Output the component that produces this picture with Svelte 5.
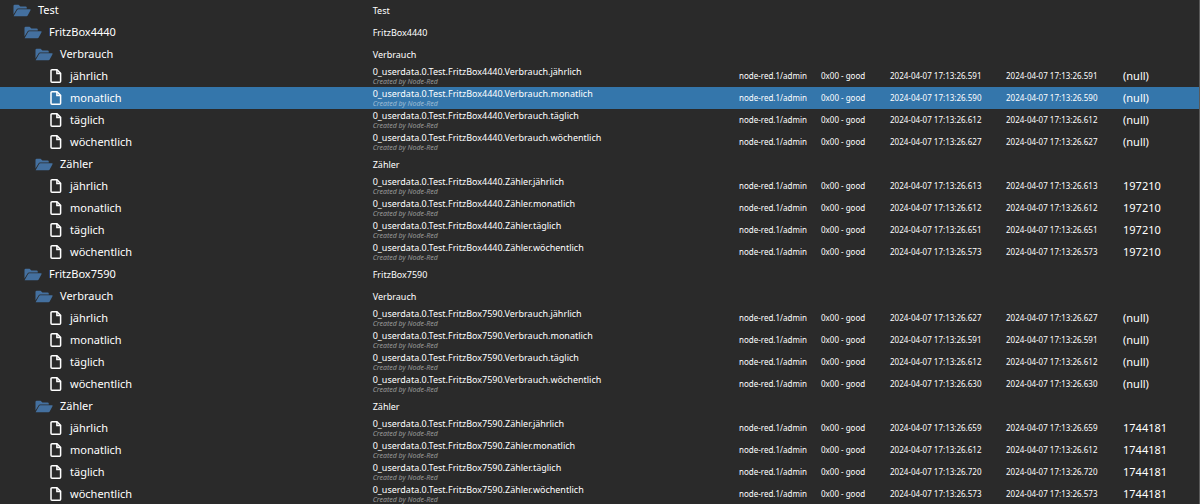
<script>
  const prefix = '0_userdata.0';
  const stamp = '2024-04-07 17:13:26.';
  const periods = ['jährlich', 'monatlich', 'täglich', 'wöchentlich'];

  const boxes = [
    {
      name: 'FritzBox4440',
      groups: [
        { name: 'Verbrauch', ms: ['591', '590', '612', '627'], value: '(null)' },
        { name: 'Zähler', ms: ['613', '612', '651', '573'], value: '197210' }
      ]
    },
    {
      name: 'FritzBox7590',
      groups: [
        { name: 'Verbrauch', ms: ['627', '591', '612', '630'], value: '(null)' },
        { name: 'Zähler', ms: ['659', '612', '720', '573'], value: '1744181' }
      ]
    }
  ];

  const rows = [{ id: 'Test', name: 'Test', level: 0, folder: true }];
  for (const box of boxes) {
    rows.push({ id: `Test.${box.name}`, name: box.name, level: 1, folder: true });
    for (const group of box.groups) {
      const path = `Test.${box.name}.${group.name}`;
      rows.push({ id: path, name: group.name, level: 2, folder: true });
      periods.forEach((name, i) => {
        rows.push({
          id: `${path}.${name}`,
          name,
          level: 3,
          folder: false,
          time: stamp + group.ms[i],
          value: group.value
        });
      });
    }
  }

  let selected = $state('Test.FritzBox4440.Verbrauch.monatlich');
</script>

<main>
  <table>
    <colgroup>
      <col class="c-name" />
      <col />
      <col class="c-from" />
      <col class="c-quality" />
      <col class="c-time" />
      <col class="c-time" />
      <col class="c-value" />
    </colgroup>
    <tbody>
      {#each rows as row (row.id)}
        <tr class:selected={row.id === selected} onclick={() => (selected = row.id)}>
          <td>
            <div class="name level-{row.level}">
              {#if row.folder}
                <svg class="folder" viewBox="0 0 18 13" aria-hidden="true">
                  <path d="M0.5 10.5V2Q0.5 0.8 1.7 0.8H5.6L7.4 2.5H12.6Q13.8 2.5 13.8 3.7V4.6H5.2Q4 4.6 3.4 5.7Z" />
                  <path d="M0.6 12.2L4.1 6Q4.5 5.3 5.3 5.3H17Q18 5.3 17.5 6.2L14.7 11.5Q14.3 12.2 13.5 12.2Z" />
                </svg>
              {:else}
                <svg class="file" viewBox="0 0 12 14" aria-hidden="true">
                  <path d="M2 0.8H7L10.6 4.4V12.2Q10.6 13.2 9.6 13.2H2Q1 13.2 1 12.2V1.8Q1 0.8 2 0.8Z" />
                  <path d="M6.9 1V4.5H10.4" />
                </svg>
              {/if}
              <span>{row.name}</span>
            </div>
          </td>
          {#if row.folder}
            <td class="title">{row.name}</td>
            <td colspan="5"></td>
          {:else}
            <td class="title">
              <div>{prefix}.{row.id}</div>
              <div class="desc">Created by Node-Red</div>
            </td>
            <td>node-red.1/admin</td>
            <td>0x00 - good</td>
            <td>{row.time}</td>
            <td>{row.time}</td>
            <td class="value">{row.value}</td>
          {/if}
        </tr>
      {/each}
    </tbody>
  </table>
</main>

<style>
  :global(body) {
    background: #2a2a2a;
    overflow: hidden;
  }
  main {
    color: #fff;
    font: 8px/11px "Noto Sans", "Open Sans", sans-serif;
    border-right: 1px solid #5a5a5a;
  }
  table {
    width: 100%;
    margin-top: -1px;
    border-collapse: collapse;
    table-layout: fixed;
  }
  .c-name { width: 31%; }
  .c-from { width: 82px; }
  .c-quality { width: 69px; }
  .c-time { width: 116px; }
  .c-value { width: 77px; }
  td {
    height: 20px;
    padding: 0 0 2px;
    white-space: nowrap;
    vertical-align: middle;
  }
  td:first-child {
    height: 22px;
    padding: 0;
  }
  .selected { background: #3476ab; }
  .name {
    display: flex;
    align-items: center;
    font-size: 11px;
    line-height: 22px;
  }
  .level-0 { padding-left: 13px; }
  .level-1 { padding-left: 24px; }
  .level-2 { padding-left: 35px; }
  .level-3 { padding-left: 50px; }
  svg { display: block; flex: none; }
  .folder {
    width: 18px;
    height: 13px;
    margin-right: 7px;
    fill: #44709f;
  }
  .file {
    width: 12px;
    height: 14px;
    margin-right: 8px;
    fill: none;
    stroke: #fff;
    stroke-width: 1.5;
  }
  .title {
    padding: 0 0 0 1px;
    font-size: 9px;
  }
  .desc {
    color: rgba(255, 255, 255, 0.5);
    font-size: 7px;
    line-height: 10px;
    font-style: italic;
  }
  .value {
    padding-left: 1px;
    font-size: 11px;
  }
</style>
